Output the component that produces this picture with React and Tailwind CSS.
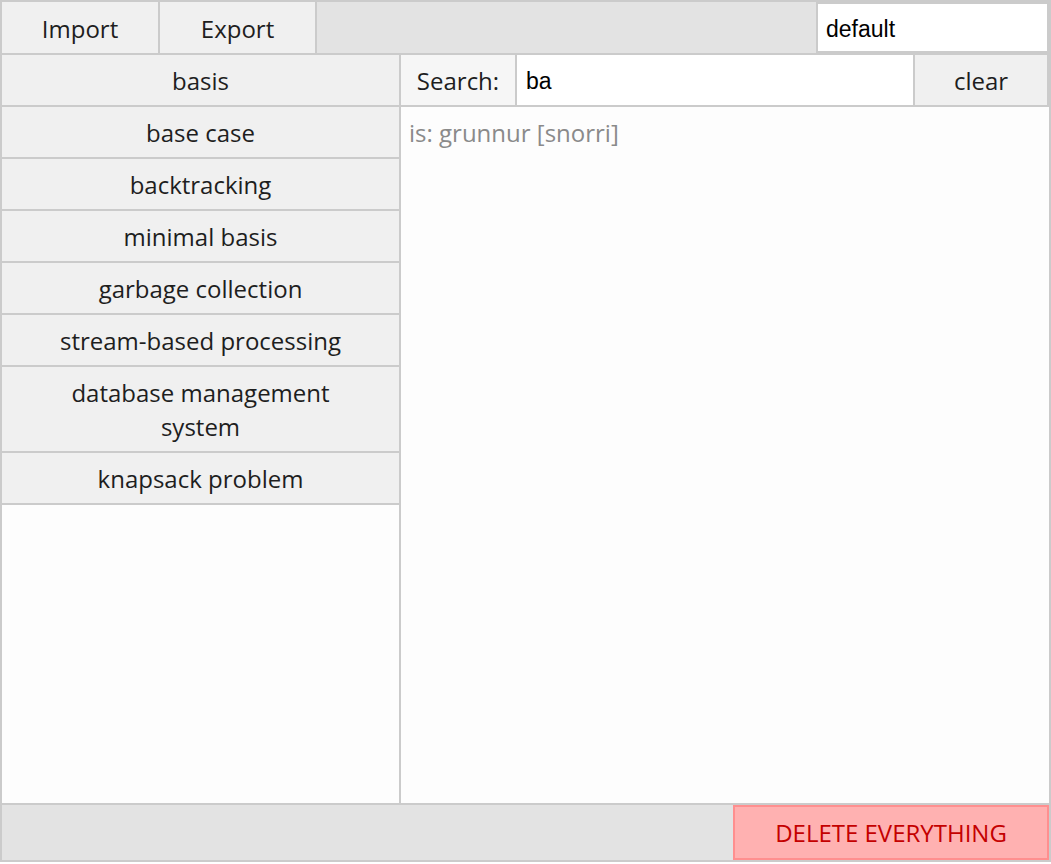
import React from "react";

const items = [
  "base case",
  "backtracking",
  "minimal basis",
  "garbage collection",
  "stream-based processing",
  "database management system",
  "knapsack problem",
];

export default function App() {
  return (
    <div className="w-[1051px] h-[864px] bg-white font-['Open_Sans',sans-serif] text-[24px] leading-[34px] text-[#1e1e1e]">
      <div className="w-[1051px] h-[862px] border-2 border-[#cbcbcb] flex flex-col bg-[#e3e3e3]">
        {/* Top bar */}
        <div className="flex h-[53px] border-b-2 border-[#cbcbcb] shrink-0">
          <button className="w-[158px] border-r-2 border-[#cbcbcb] bg-[#f0f0f0] pt-[2px]">Import</button>
          <button className="w-[157px] border-r-2 border-[#cbcbcb] bg-[#f0f0f0] pt-[2px]">Export</button>
          <div className="flex-1" />
          <input
            className="w-[233px] h-full border-2 border-[#cbcbcb] bg-white px-[8px] pt-[4px] font-['Liberation_Sans',sans-serif] text-[23px] text-black outline-none"
            defaultValue="default"
          />
        </div>

        {/* Main */}
        <div className="flex flex-1 min-h-0">
          {/* Left list */}
          <div className="w-[399px] border-r-2 border-[#cbcbcb] bg-[#fdfdfd] flex flex-col">
            <button className="h-[52px] border-b-2 border-[#cbcbcb] bg-[#f0f0f0] pt-[9px] pb-[7px] text-center">basis</button>
            {items.map((t) => (
              <button
                key={t}
                className="border-b-2 border-[#cbcbcb] bg-[#f0f0f0] pt-[9px] pb-[7px] px-12 text-center"
              >
                {t}
              </button>
            ))}
          </div>

          {/* Right panel */}
          <div className="flex-1 flex flex-col bg-[#fdfdfd]">
            <div className="flex h-[52px] border-b-2 border-[#cbcbcb]">
              <div className="w-[116px] border-r-2 border-[#cbcbcb] bg-[#f6f6f6] flex items-center justify-center pt-[2px]">
                Search:
              </div>
              <input
                className="flex-1 min-w-0 bg-white px-[9px] pt-[2px] font-['Liberation_Sans',sans-serif] text-[23px] text-black outline-none border-r-2 border-[#cbcbcb]"
                defaultValue="ba"
              />
              <button className="w-[134px] bg-[#f0f0f0] border-r-2 border-[#cbcbcb] pt-[2px]">clear</button>
            </div>
            <div className="px-2 pt-[9px] text-[#8a8a8a]">is: grunnur [snorri]</div>
          </div>
        </div>

        {/* Bottom bar */}
        <div className="flex h-[57px] border-t-2 border-[#cbcbcb] justify-end shrink-0">
          <button className="w-[316px] h-full border-2 border-[#ff8f8f] bg-[#ffb1b1] text-[#c40000]">
            DELETE EVERYTHING
          </button>
        </div>
      </div>
    </div>
  );
}
